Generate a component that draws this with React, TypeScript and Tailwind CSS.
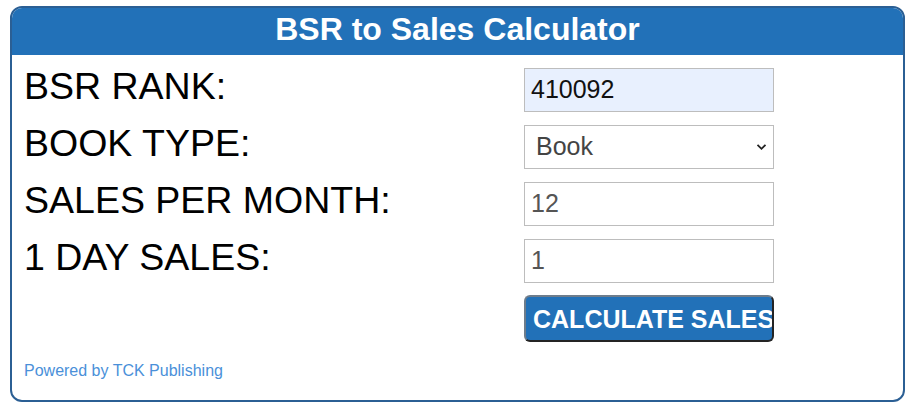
import React from "react";

const rows = [
  { label: "BSR RANK:", kind: "auto", value: "410092" },
  { label: "BOOK TYPE:", kind: "select", value: "Book" },
  { label: "SALES PER MONTH:", kind: "input", value: "12" },
  { label: "1 DAY SALES:", kind: "input", value: "1" },
];

export default function App() {
  return (
    <div className="w-[910px] h-[406px] bg-white pt-[6px] pl-[10px]" style={{ fontFamily: '"Liberation Sans", Arial, sans-serif' }}>
      <div className="w-[895px] h-[396px] border-2 border-[#2b5f94] rounded-[12px] overflow-hidden flex flex-col">
        <div className="h-[47px] bg-[#2271b8] pt-[3px] text-center text-white font-bold text-[32px] leading-[37px]">
          BSR to Sales Calculator
        </div>
        <div className="flex flex-col pt-[9px] pl-[12px]">
          {rows.map((r) => (
            <div key={r.label} className="flex h-[57px] items-start">
              <div className="w-[500px] text-[37.5px] leading-[44px] text-black">{r.label}</div>
              <div className="mt-[4px] w-[250px] h-[44px] relative">
                {r.kind === "select" ? (
                  <div className="w-full h-full border border-[#bdbdbd] bg-white flex items-center pl-[11px] text-[25px] text-[#444]">
                    Book
                    <svg className="absolute right-[7px] top-[18px]" width="11" height="8" viewBox="0 0 11 8">
                      <path d="M1.5 1.8 L5.5 5.8 L9.5 1.8" fill="none" stroke="#222" strokeWidth="1.8" />
                    </svg>
                  </div>
                ) : (
                  <div
                    className={
                      "w-full h-full border border-[#bdbdbd] flex items-center pl-[6px] text-[25px] " +
                      (r.kind === "auto" ? "bg-[#e8f0fe] text-[#111]" : "bg-white text-[#555]")
                    }
                  >
                    {r.value}
                  </div>
                )}
              </div>
            </div>
          ))}
          <div className="flex">
            <div className="w-[500px]" />
            <button className="mt-[3px] w-[250px] h-[47px] rounded-[6px] border-2 border-[#242424] border-t-[#6e7d8c] border-l-[#6e7d8c] bg-[#2271b8] text-white font-bold text-[25px] text-left pl-[7px] whitespace-nowrap overflow-hidden leading-[30px]">
              CALCULATE SALES
            </button>
          </div>
          <div className="mt-[20px] text-[16px] leading-[18px] text-[#4a90d9]">Powered by TCK Publishing</div>
        </div>
      </div>
    </div>
  );
}
